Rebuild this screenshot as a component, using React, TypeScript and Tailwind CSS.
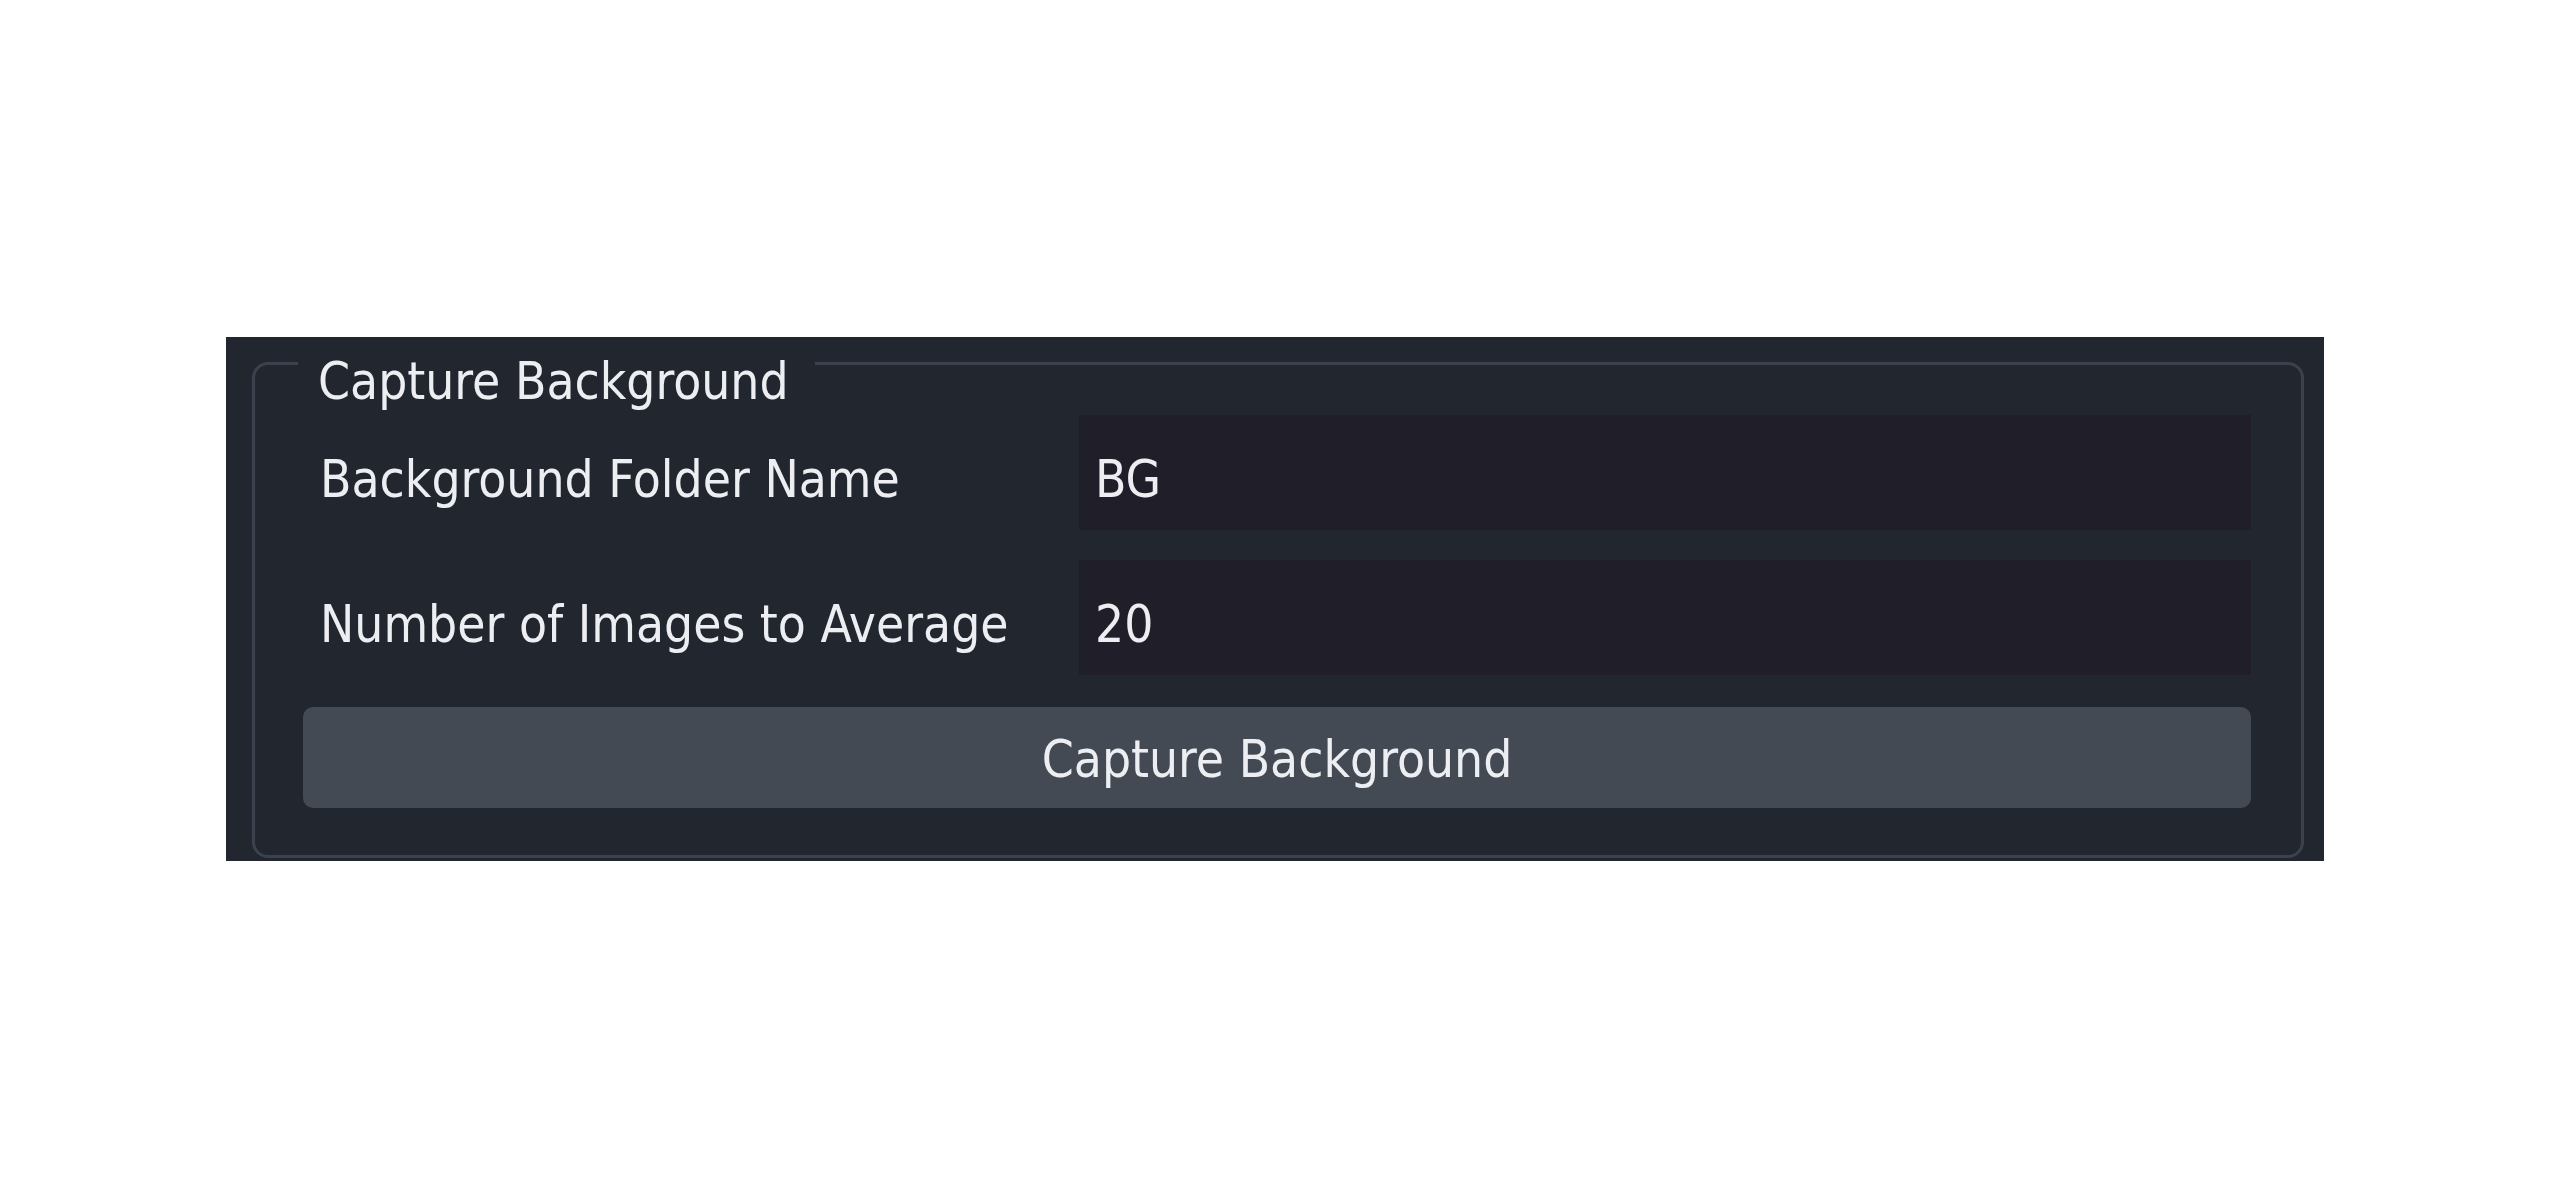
import React from "react";

const font = {
  fontFamily: '"DejaVu Sans Condensed", "Liberation Sans", Arial, sans-serif',
};

function Field({ label, value }: { label: string; value: string }) {
  return (
    <div className="flex items-center h-[115px]">
      <div className="w-[776px] shrink-0 pl-[17px] pt-[14px] text-[51px] leading-[52px] text-[#eceef2] whitespace-nowrap">
        {label}
      </div>
      <div className="flex-1 h-full bg-[#201f29] flex items-center pl-[16px] pt-[14px] text-[51px] leading-[52px] text-[#eceef2]">
        {value}
      </div>
    </div>
  );
}

export default function App() {
  return (
    <div className="w-[2550px] h-[1200px] bg-white pt-[337px] pl-[226px]" style={font}>
      <div className="w-[2098px] h-[524px] bg-[#21262f] pt-[25px] pl-[26px] pr-[20px]">
        <div className="h-[496px] border-[3px] border-[#3b424e] rounded-[16px]">
          <div className="w-fit ml-[43px] -mt-[9px] pl-[20px] pr-[26px] bg-[#21262f] text-[51px] leading-[52px] text-[#eceef2] whitespace-nowrap">
            Capture Background
          </div>
          <div className="flex flex-col pl-[48px] pr-[50px] pt-[7px]">
            <Field label="Background Folder Name" value="BG" />
            <div className="mt-[30px]">
              <Field label="Number of Images to Average" value="20" />
            </div>
            <button className="mt-[32px] h-[101px] w-full rounded-[10px] bg-[#434a54] pt-[4px] text-[51px] leading-[52px] text-[#eceef2]">
              Capture Background
            </button>
          </div>
        </div>
      </div>
    </div>
  );
}
